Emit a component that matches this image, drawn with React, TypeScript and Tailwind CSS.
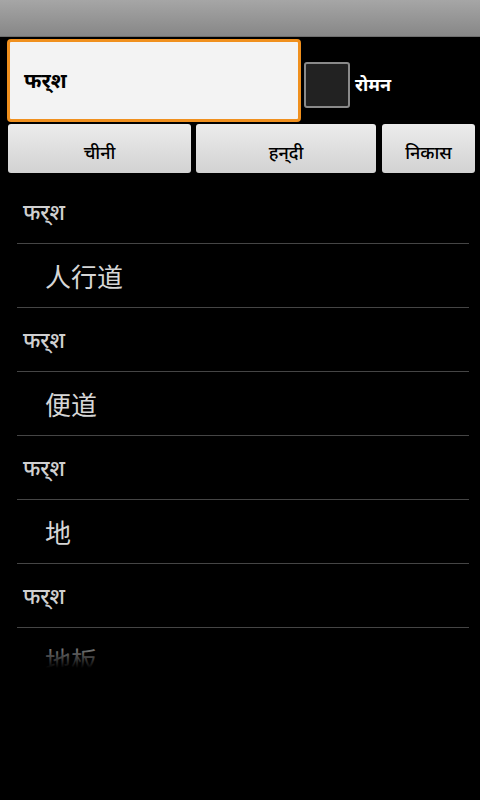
import { useState } from 'react';

const entries = [
  { word: 'फर्‌श', meaning: '人行道' },
  { word: 'फर्‌श', meaning: '便道' },
  { word: 'फर्‌श', meaning: '地' },
  { word: 'फर्‌श', meaning: '地板' },
];

const deva = { fontFamily: '"Noto Sans", "Noto Sans Devanagari", "Lohit Devanagari", sans-serif' };
const cjk = { fontFamily: '"Noto Sans CJK SC", "Noto Sans", sans-serif' };

export default function App() {
  const [roman, setRoman] = useState(false);

  return (
    <div className="w-[480px] h-[800px] bg-black overflow-hidden" style={deva}>
      {/* Title bar */}
      <div className="h-[37px] bg-gradient-to-b from-[#a6a6a6] to-[#878787] border-b border-[#6e6e6e]" />

      {/* Search row */}
      <div className="flex items-center pl-[7px] pt-[2px]">
        <div className="w-[294px] h-[83px] rounded-[4px] border-[3px] border-[#f0901e] bg-[#f3f3f3] flex items-center pl-[14px]">
          <span className="text-[21px] text-black font-bold">फर्‌श</span>
        </div>
        <button
          onClick={() => setRoman(!roman)}
          className="ml-[3px] mt-[8px] w-[46px] h-[46px] rounded-[3px] border-2 border-[#8a8a8a] bg-[#222222] flex items-center justify-center"
          aria-label="roman"
        >
          {roman && <span className="text-[#9ee03c] text-2xl font-bold">✓</span>}
        </button>
        <span className="ml-[5px] mt-[8px] text-white text-[18px] font-bold">रोमन</span>
      </div>

      {/* Buttons */}
      <div className="flex pl-[8px] pt-[2px]">
        <button className="w-[183px] h-[49px] pt-[7px] rounded-[3px] bg-gradient-to-b from-[#ececec] to-[#d2d2d2] text-black text-[18px] font-medium flex items-center justify-center">
          चीनी
        </button>
        <button className="ml-[5px] w-[180px] h-[49px] pt-[7px] rounded-[3px] bg-gradient-to-b from-[#ececec] to-[#d2d2d2] text-black text-[18px] font-medium flex items-center justify-center">
          हन्‌दी
        </button>
        <button className="ml-[6px] w-[93px] h-[49px] pt-[7px] rounded-[3px] bg-gradient-to-b from-[#ececec] to-[#d2d2d2] text-black text-[18px] font-medium flex items-center justify-center">
          निकास
        </button>
      </div>

      {/* Result list */}
      <div className="relative mt-[7px] h-[488px] overflow-hidden">
        <div className="pl-[17px] pr-[11px]">
          {entries.map((e, i) => (
            <div key={i}>
              <div className="h-[64px] border-b border-[#454545] flex items-center pl-[6px]">
                <span className="text-[22px] text-[#d0d0d0] font-medium">{e.word}</span>
              </div>
              <div className="h-[64px] border-b border-[#454545] flex items-center pl-[28px]">
                <span className="text-[26px] text-[#d6d6d6]" style={cjk}>{e.meaning}</span>
              </div>
            </div>
          ))}
        </div>
        <div className="absolute left-0 right-0 bottom-0 h-[34px] bg-gradient-to-b from-transparent to-black" />
      </div>
    </div>
  );
}
